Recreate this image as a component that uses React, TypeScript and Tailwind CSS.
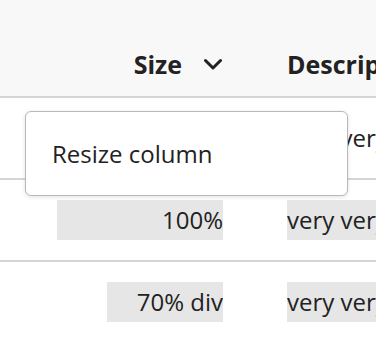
interface Row {
  size: string;
  sizeWidth?: string;
  description: string;
  filled: boolean;
}

const rows: Row[] = [
  { size: "", description: "very very long description text", filled: false },
  { size: "100%", sizeWidth: "w-full", description: "very very long description text", filled: true },
  { size: "70% div", sizeWidth: "w-[70%]", description: "very very long description text", filled: true },
];

function CellBox({ children, className }: { children?: React.ReactNode; className?: string }) {
  return (
    <div className={`h-10 flex items-center overflow-hidden whitespace-nowrap ${className ?? ""}`}>
      {children}
    </div>
  );
}

function Chevron() {
  return (
    <svg width="20" height="12" viewBox="0 0 20 12" fill="none" className="shrink-0">
      <path d="M2.5 2.5 L10 10 L17.5 2.5" stroke="#222222" strokeWidth="3" strokeLinecap="round" strokeLinejoin="round" />
    </svg>
  );
}

export default function App() {
  return (
    <div
      className="relative w-[376px] h-[338px] overflow-hidden bg-white text-[#222222]"
      style={{ fontFamily: '"Open Sans", "Noto Sans", sans-serif' }}
    >
      {/* Header */}
      <div className="h-[98px] bg-[#f8f8f8] border-b-2 border-[#d5d5d5] flex items-end">
        <div className="h-16 flex w-full">
          <div className="w-[25px] shrink-0" />
          <div className="w-[230px] shrink-0 px-8 flex items-center justify-end gap-[21px]">
            <span className="text-[25px] font-bold leading-none">Size</span>
            <Chevron />
          </div>
          <div className="flex-1 pl-8 flex items-center whitespace-nowrap overflow-hidden">
            <span className="text-[25px] font-bold leading-none">Description</span>
          </div>
        </div>
      </div>

      {/* Rows */}
      {rows.map((row, i) => (
        <div key={i} className="h-[82px] border-b-2 border-[#d5d5d5] flex items-center">
          <div className="w-[25px] shrink-0" />
          <div className="w-[230px] shrink-0 px-8 flex justify-end">
            {row.filled ? (
              <CellBox className={`${row.sizeWidth} bg-[#e6e6e6] justify-end`}>
                <span className="text-[24px] leading-none">{row.size}</span>
              </CellBox>
            ) : (
              <CellBox className="w-full" />
            )}
          </div>
          <div className="flex-1 pl-8 overflow-hidden">
            <CellBox className={row.filled ? "bg-[#e6e6e6]" : ""}>
              <span className="text-[24px] leading-none">{row.description}</span>
            </CellBox>
          </div>
        </div>
      ))}

      {/* Column menu */}
      <div className="absolute left-[25px] top-[111px] w-[323px] h-[85px] bg-white border border-[#b9b9b9] rounded-[6px] shadow-[0_1px_4px_rgba(0,0,0,0.12)] flex items-center px-[26px]">
        <span className="text-[24px] leading-none">Resize column</span>
      </div>
    </div>
  );
}
